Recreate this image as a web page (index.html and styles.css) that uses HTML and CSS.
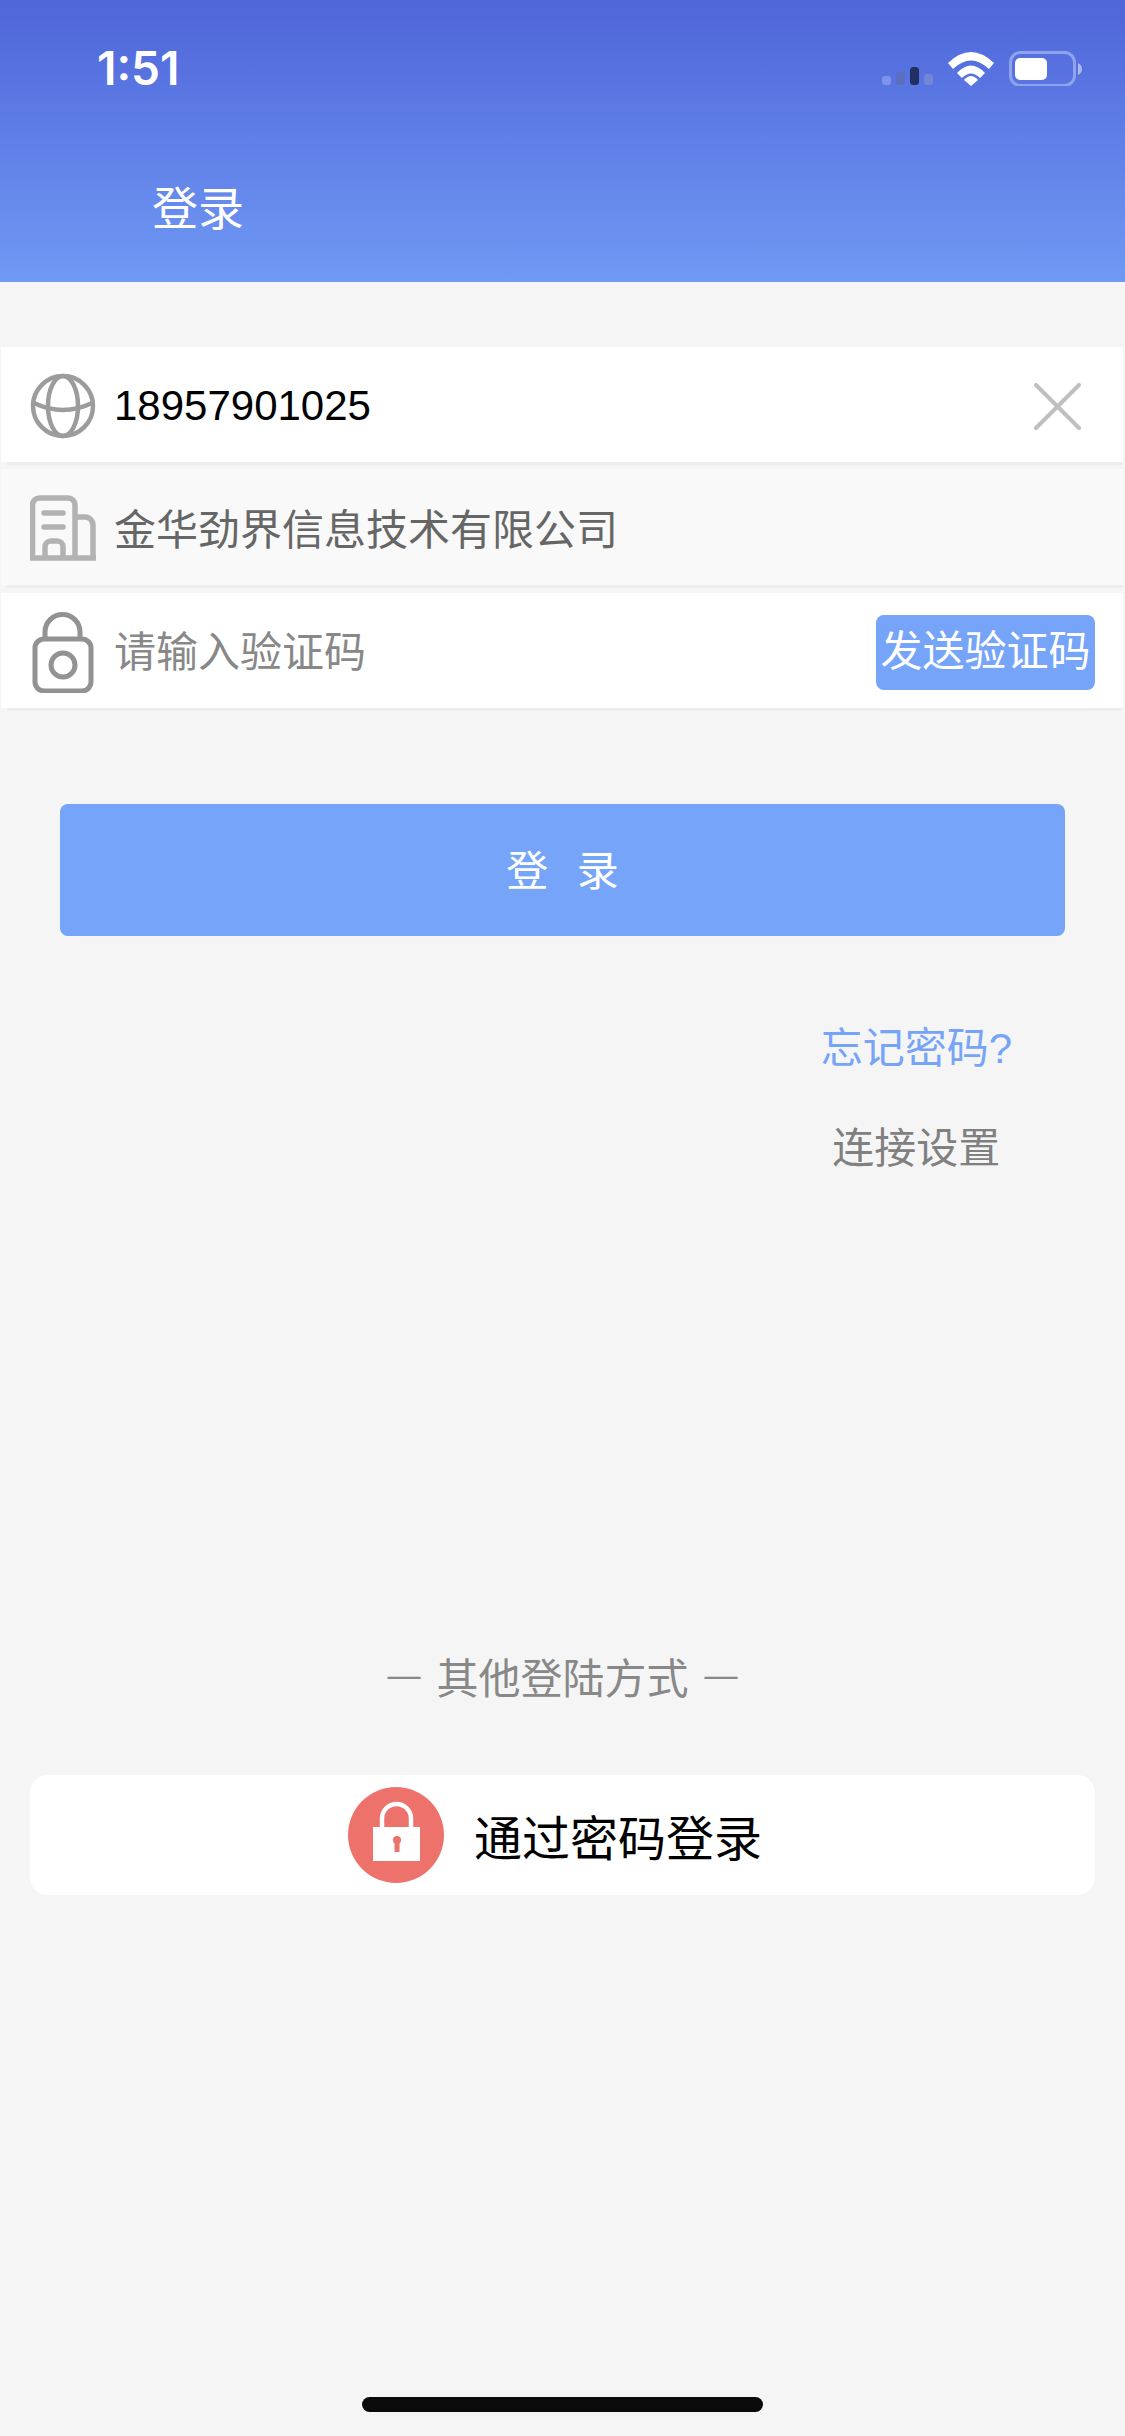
FILE: index.html
```html
<!doctype html>
<html lang="zh-CN">
<head>
	<meta charset="UTF-8">
	<title>登录</title>
	<link rel="stylesheet" href="styles.css">
</head>
<body>
	<div class="page">
		<div class="header">
			<div class="statusbar">
				<span class="time">1:51</span>
				<svg class="status-icons" width="201" height="36" viewBox="882 50 201 36">
					<rect x="882" y="76" width="9" height="9" rx="3" fill="#7f94e8"/>
					<rect x="896" y="72" width="9" height="13" rx="3" fill="#5a6fbd"/>
					<rect x="910" y="67" width="9" height="18" rx="3.5" fill="#212f63"/>
					<rect x="924" y="74" width="9" height="11" rx="3" fill="#7286d8"/>
					<path d="M948 63 Q971 41 994 63 L989 69 Q971 52 953 69 Z" fill="#fff"/>
					<path d="M957 73 Q971 58 985 73 L980 78 Q971 69 962 78 Z" fill="#fff"/>
					<path d="M964 80 Q971 72 978 80 L971 86 Z" fill="#fff"/>
					<rect x="1010.5" y="52.5" width="64" height="33" rx="10" fill="none" stroke="#8fa3ec" stroke-width="3"/>
					<rect x="1015" y="58" width="32" height="22" rx="5" fill="#fff"/>
					<path d="M1078 63 Q1082 65 1082 69 Q1082 73 1078 75 Z" fill="#a9b8ef"/>
				</svg>
			</div>
			<div class="title">登录</div>
		</div>

		<div class="field field-first">
			<div class="field-body">
				<svg class="field-icon" width="66" height="66" viewBox="0 0 66 66" fill="none" stroke="#9c9c9c" stroke-width="4.5">
					<circle cx="33" cy="33" r="30"/>
					<ellipse cx="33" cy="33" rx="15" ry="30"/>
					<path d="M4 30 Q33 44 62 30"/>
				</svg>
				<span class="field-text phone">18957901025</span>
				<svg class="clear" width="47" height="47" viewBox="0 0 47 47" stroke="#bfbfbf" stroke-width="4" stroke-linecap="round">
					<path d="M2 2 L45 45 M45 2 L2 45"/>
				</svg>
			</div>
		</div>
		<div class="field">
			<div class="field-body company">
				<svg class="field-icon" width="66" height="66" viewBox="0 0 66 66" fill="none" stroke="#b2b2b2" stroke-width="5.5">
					<path d="M2.5 64 V10 a7 7 0 0 1 7-7 H38 a7 7 0 0 1 7 7 V64"/>
					<path d="M45 22 H55 a8 8 0 0 1 8 8 V64"/>
					<path d="M0 63 H66"/>
					<path d="M14 18 H33 M14 32 H33" stroke-linecap="round"/>
					<path d="M15 64 V52 a6 6 0 0 1 6-6 H27 a6 6 0 0 1 6 6 V64"/>
				</svg>
				<span class="field-text">金华劲界信息技术有限公司</span>
			</div>
		</div>
		<div class="field field-last">
			<div class="field-body">
				<svg class="field-icon" width="66" height="81" viewBox="-3 0 66 81" fill="none" stroke="#929292" stroke-width="5">
					<rect x="2" y="27" width="56" height="52" rx="9"/>
					<path d="M12 27 V20 a17.5 17.5 0 0 1 35 0 V27"/>
					<circle cx="30" cy="53" r="12"/>
				</svg>
				<span class="field-text placeholder">请输入验证码</span>
				<span class="send">发送验证码</span>
			</div>
		</div>

		<div class="login">登 录</div>

		<div class="links">
			<span class="forgot">忘记密码?</span>
			<span class="connect">连接设置</span>
		</div>

		<div class="others">
			<span class="dash">—</span>
			<span>其他登陆方式</span>
			<span class="dash">—</span>
		</div>

		<div class="pwd-login">
			<svg width="96" height="96" viewBox="0 0 96 96">
				<circle cx="48" cy="48" r="48" fill="#ee726c"/>
				<path d="M34 41 V31.5 a14.5 14.5 0 0 1 29 0 V41" fill="none" stroke="#fff" stroke-width="4.5"/>
				<rect x="25" y="40" width="47" height="34" fill="#fff"/>
				<circle cx="49" cy="53" r="4" fill="#ee726c"/>
				<rect x="46.5" y="54" width="5" height="11" fill="#ee726c"/>
			</svg>
			<span class="pwd-text">通过密码登录</span>
		</div>

		<div class="home-bar"></div>
	</div>
</body>
</html>
```

FILE: styles.css
```css
*{
	padding: 0;
	margin: 0;
	box-sizing: border-box;
}
body{
	background-color: #f5f5f5;
	font-family: "Liberation Sans", "Noto Sans CJK SC", sans-serif;
	font-size: 42px;
}
.page{
	display: flex;
	flex-direction: column;
	height: 2436px;
}
/*----------------------------header----------------------------------------------*/
.header{
	height: 282px;
	color: #fff;
	background: linear-gradient(180deg, #4f65d9, #7099f4);
}
.statusbar{
	display: flex;
	align-items: center;
	justify-content: space-between;
	height: 136px;
	padding: 0 42px 0 97px;
}
.time{
	font-family: Inter, sans-serif;
	font-size: 46px;
	font-weight: 600;
}
.status-icons{
	display: block;
}
.title{
	height: 146px;
	line-height: 146px;
	padding-left: 152px;
	font-size: 46px;
}
/*----------------------------form rows----------------------------------------------*/
.field{
	margin: 0 2px 4px 1px;
}
.field-first{
	margin-top: 65px;
}
.field-last{
	margin-top: 1px;
	margin-bottom: 0;
}
.field::after{
	content: "";
	display: block;
	height: 3px;
	margin-left: 6px;
	background-color: #eee;
}
.field-body{
	display: flex;
	align-items: center;
	height: 115px;
	padding: 3px 42px 0 29px;
	background-color: #fff;
}
.field-body.company{
	height: 116px;
	padding-top: 2px;
	background-color: #f9f9f9;
}
.field-icon{
	flex-shrink: 0;
	filter: blur(0.6px);
}
.field-text{
	margin: 0 0 4px 18px;
	flex: 1;
	color: #666;
}
.field-text.phone{
	margin-bottom: 0;
	color: #000;
}
.field-text.placeholder{
	margin-bottom: 8px;
	color: #888;
}
.send{
	width: 219px;
	height: 75px;
	line-height: 73px;
	margin-right: -14px;
	text-align: center;
	white-space: nowrap;
	color: #fff;
	background-color: #76a4f8;
	border-radius: 8px;
}
/*----------------------------buttons and links----------------------------------------------*/
.login{
	height: 132px;
	line-height: 136px;
	margin: 93px 60px 0;
	text-align: center;
	word-spacing: 17px;
	color: #fff;
	background-color: #76a4f8;
	border-radius: 8px;
}
.links{
	display: flex;
	flex-direction: column;
	align-items: center;
	align-self: flex-end;
	margin: 63px 113px 0 0;
	line-height: 100px;
}
.forgot{
	color: #76a4f8;
}
.connect{
	color: #808080;
}
.others{
	display: flex;
	align-items: center;
	justify-content: center;
	gap: 16px;
	height: 60px;
	margin-top: 446px;
	color: #888;
}
.dash{
	font-size: 33px;
}
.pwd-login{
	display: flex;
	align-items: center;
	gap: 30px;
	height: 120px;
	margin: 70px 30px 0;
	padding-left: 318px;
	background-color: #fff;
	border-radius: 18px;
}
.pwd-text{
	font-size: 48px;
	color: #000;
}
.home-bar{
	width: 401px;
	height: 15px;
	margin: auto auto 24px;
	background-color: #0a0a0a;
	border-radius: 8px;
}
```
